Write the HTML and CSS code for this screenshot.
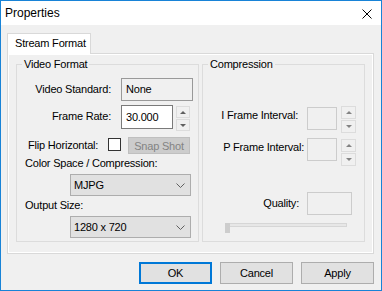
FILE: index.html
```html
<!DOCTYPE html>
<html lang="en">
<head>
    <meta charset="UTF-8">
    <title>Properties</title>
    <link rel="stylesheet" href="styles.css">
</head>
<body>

<div class="window">
    <div class="titlebar">
        <span>Properties</span>
        <svg class="close" width="10" height="10" viewBox="0 0 10 10">
            <path d="M0.5 0.5 L9.5 9.5 M9.5 0.5 L0.5 9.5" stroke="#000" stroke-width="1" fill="none"/>
        </svg>
    </div>

    <div class="content">
        <div class="tabs">
            <div class="tab">Stream Format</div>
        </div>

        <div class="panel">
            <!-- Video Format group -->
            <fieldset class="group video">
                <legend>Video Format</legend>

                <div class="row row-standard">
                    <span class="label">Video Standard:</span>
                    <div class="field readonly standard">None</div>
                </div>

                <div class="row row-rate">
                    <span class="label">Frame Rate:</span>
                    <div class="field rate">30.000</div>
                    <div class="spinner">
                        <div class="spin-btn"><i class="arrow-up"></i></div>
                        <div class="spin-btn"><i class="arrow-down"></i></div>
                    </div>
                </div>

                <div class="row row-flip">
                    <span class="flip-label">Flip Horizontal:</span>
                    <span class="checkbox"></span>
                    <button class="snap" disabled>Snap Shot</button>
                </div>

                <div class="caption caption-color">Color Space / Compression:</div>
                <div class="combo combo-color">
                    <span>MJPG</span>
                    <svg width="9" height="5" viewBox="0 0 9 5"><path d="M0.5 0.5 L4.5 4.5 L8.5 0.5" stroke="#606060" fill="none"/></svg>
                </div>

                <div class="caption caption-size">Output Size:</div>
                <div class="combo combo-size">
                    <span>1280 x 720</span>
                    <svg width="9" height="5" viewBox="0 0 9 5"><path d="M0.5 0.5 L4.5 4.5 L8.5 0.5" stroke="#606060" fill="none"/></svg>
                </div>
            </fieldset>

            <!-- Compression group -->
            <fieldset class="group compression">
                <legend>Compression</legend>

                <div class="crow crow-i">
                    <span class="clabel">I Frame Interval:</span>
                    <div class="field disabled small"></div>
                    <div class="spinner">
                        <div class="spin-btn"><i class="arrow-up"></i></div>
                        <div class="spin-btn"><i class="arrow-down"></i></div>
                    </div>
                </div>

                <div class="crow crow-p">
                    <span class="clabel">P Frame Interval:</span>
                    <div class="field disabled small"></div>
                    <div class="spinner">
                        <div class="spin-btn"><i class="arrow-up"></i></div>
                        <div class="spin-btn"><i class="arrow-down"></i></div>
                    </div>
                </div>

                <div class="crow crow-q">
                    <span class="clabel">Quality:</span>
                    <div class="field disabled quality"></div>
                </div>

                <div class="slider">
                    <div class="track"></div>
                    <div class="thumb"></div>
                </div>
            </fieldset>
        </div>

        <div class="actions">
            <button class="btn default">OK</button>
            <button class="btn">Cancel</button>
            <button class="btn">Apply</button>
        </div>
    </div>
</div>

</body>
</html>
```

FILE: styles.css
```css
* {
    margin: 0;
    padding: 0;
    box-sizing: border-box;
}

body {
    width: 382px;
    height: 291px;
    font-family: "Liberation Sans", Arial, sans-serif;
    font-size: 11px;
    letter-spacing: -0.2px;
    color: #000;
    background: #f0f0f0;
    overflow: hidden;
}

.window {
    width: 382px;
    height: 291px;
    border: 1px solid #1883d7;
    background: #f0f0f0;
    display: flex;
    flex-direction: column;
}

.titlebar {
    height: 24px;
    flex: none;
    background: #fff;
    display: flex;
    align-items: center;
    justify-content: space-between;
    padding: 0 9px 0 4px;
    font-size: 12px;
    letter-spacing: 0;
}

.close {
    margin-top: 2px;
}

.content {
    flex: 1;
    padding: 8px 7px 0 6px;
}

.tabs {
    display: flex;
}

.tab {
    width: 84px;
    height: 21px;
    margin-bottom: -1px;
    padding: 0 0 0 7px;
    line-height: 19px;
    white-space: nowrap;
    background: #fff;
    border: 1px solid #d9d9d9;
    border-bottom: none;
    position: relative;
    z-index: 1;
}

.panel {
    height: 201px;
    border: 1px solid #d9d9d9;
    box-shadow: inset 0 0 0 1px #fff;
    padding: 4px 8px 0 8px;
    display: flex;
    gap: 3px;
}

.group {
    height: 184px;
    border: 1px solid #dcdcdc;
    padding: 0;
    min-width: 0;
}

.video {
    width: 183px;
}

.compression {
    width: 163px;
}

legend {
    margin-left: 5px;
    padding: 0 2px;
    line-height: 13px;
}

/* video format rows */
.row {
    display: flex;
    align-items: flex-start;
}

.label {
    width: 94px;
    text-align: right;
    line-height: 23px;
}

.row-standard {
    margin-top: 7px;
}

.row-rate {
    margin-top: 4px;
}

.row-flip {
    margin-top: 6px;
}

.field {
    height: 23px;
    border: 1px solid #7a7a7a;
    background: #fff;
    padding-left: 4px;
    line-height: 21px;
}

.readonly {
    background: #f0f0f0;
    border-color: #999;
}

.standard {
    width: 72px;
    margin-left: 10px;
}

.rate {
    width: 52px;
    height: 24px;
    margin-left: 10px;
    line-height: 22px;
}

.spinner {
    display: flex;
    flex-direction: column;
    gap: 1px;
}

.row-rate .spinner {
    width: 14px;
    margin-left: 3px;
    margin-top: 1px;
}

.spin-btn {
    height: 12px;
    border: 1px solid #dcdcdc;
    background: #f0f0f0;
    display: flex;
    align-items: center;
    justify-content: center;
}

.arrow-up {
    border-left: 3px solid transparent;
    border-right: 3px solid transparent;
    border-bottom: 3px solid #606060;
}

.arrow-down {
    border-left: 3px solid transparent;
    border-right: 3px solid transparent;
    border-top: 3px solid #606060;
}

.flip-label {
    width: 80px;
    margin-left: 11px;
    line-height: 17px;
}

.checkbox {
    width: 13px;
    height: 13px;
    margin-top: 1px;
    border: 1px solid #333;
    background: #fff;
}

.snap {
    width: 62px;
    height: 17px;
    margin-left: 7px;
    background: #cccccc;
    border: 1px solid #bfbfbf;
    color: #838383;
    font: inherit;
    letter-spacing: inherit;
}

.caption {
    margin-left: 8px;
    line-height: 13px;
}

.caption-color {
    margin-top: 3px;
}

.caption-size {
    margin-top: 3px;
}

.combo {
    width: 121px;
    height: 22px;
    margin-left: 53px;
    border: 1px solid #adadad;
    background: #e1e1e1;
    padding: 0 5px 0 3px;
    display: flex;
    align-items: center;
    justify-content: space-between;
}

.combo-color {
    margin-top: 4px;
}

.combo-size {
    margin-top: 4px;
}

/* compression rows */
.crow {
    display: flex;
    align-items: flex-start;
}

.clabel {
    width: 104px;
    text-align: right;
    line-height: 19px;
}

.crow-i {
    margin-top: 35px;
}

.crow-i .clabel {
    padding-right: 9px;
}

.crow-i .field {
    margin-top: 1px;
}

.crow-p {
    margin-top: 5px;
}

.crow-p .clabel {
    padding-right: 3px;
}

.crow-p .spinner {
    margin-top: 1px;
}

.crow-q {
    margin-top: 26px;
}

.crow-q .clabel {
    padding-right: 8px;
    line-height: 23px;
}

.disabled {
    background: #f0f0f0;
    border-color: #cccccc;
}

.small {
    width: 30px;
}

.quality {
    width: 45px;
}

.compression .spinner {
    width: 15px;
    margin-left: 4px;
}

.compression .spin-btn {
    height: 13px;
}

.compression .arrow-up {
    border-bottom-color: #838383;
}

.compression .arrow-down {
    border-top-color: #838383;
}

.slider {
    width: 122px;
    height: 10px;
    margin: 8px 0 0 22px;
    position: relative;
}

.track {
    height: 4px;
    margin-top: 3px;
    background: #e7e7e7;
    border: 1px solid #d6d6d6;
}

.thumb {
    position: absolute;
    left: 0;
    top: 0;
    width: 5px;
    height: 10px;
    background: #cdcdcd;
}

/* dialog buttons */
.actions {
    display: flex;
    justify-content: flex-end;
    gap: 8px;
    margin-top: 8px;
}

.btn {
    width: 73px;
    height: 22px;
    border: 1px solid #adadad;
    background: #e1e1e1;
    font: inherit;
    letter-spacing: inherit;
    color: #000;
}

.btn.default {
    border: 2px solid #0078d7;
}
```
